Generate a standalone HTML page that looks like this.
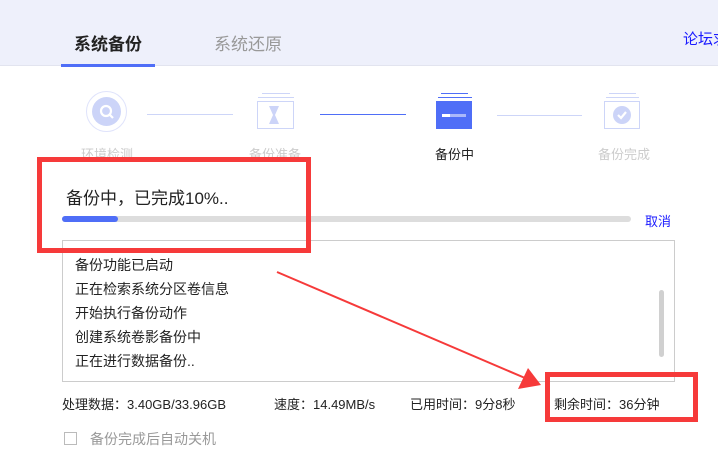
<!DOCTYPE html>
<html><head><meta charset="utf-8"><style>
*{margin:0;padding:0;box-sizing:border-box}
body{width:718px;height:446px;overflow:hidden;background:#fff;position:relative;font-family:"Liberation Sans","Noto Sans CJK SC",sans-serif}
.a{position:absolute;white-space:nowrap}
</style></head><body>
<div class="a" style="left:0;top:0;width:718px;height:66px;background:#eef0fb;border-bottom:1px solid #e2e4ef"></div>
<div class="a" style="left:74px;top:30px;font-size:17px;font-weight:bold;color:#222">系统备份</div>
<div class="a" style="left:214px;top:30px;font-size:17px;color:#999">系统还原</div>
<div class="a" style="left:61px;top:64px;width:94px;height:3px;background:#4f6ef7"></div>
<div class="a" style="left:683px;top:28px;font-size:15px;color:#1a1aff">论坛求</div>

<div class="a" style="left:86px;top:91px;width:41px;height:41px;border-radius:50%;border:1px solid #dfe3fb"></div>
<div class="a" style="left:92px;top:97px;width:29px;height:29px;border-radius:50%;background:#ccd4f8"></div>
<svg class="a" style="left:98px;top:103px" width="18" height="18"><circle cx="8" cy="8" r="5" fill="none" stroke="#fff" stroke-width="2.2"/><line x1="11.5" y1="11.5" x2="15" y2="15" stroke="#fff" stroke-width="2.2"/></svg>
<div class="a" style="left:81px;top:144px;font-size:13px;color:#ccc">环境检测</div>
<div class="a" style="left:147px;top:114px;width:86px;height:1px;background:#cdd5f8"></div>
<div class="a" style="left:262px;top:93px;width:28px;height:1px;background:#cdd5f8"></div>
<div class="a" style="left:258px;top:97px;width:36px;height:1px;background:#cdd5f8"></div>
<div class="a" style="left:257px;top:101px;width:37px;height:28px;border:1px solid #cdd5f8"></div>
<svg class="a" style="left:268px;top:106px" width="14" height="18"><path d="M1 0H11L7 9L11 18H1L5 9Z" fill="#ccd4f8"/></svg>
<div class="a" style="left:249px;top:144px;font-size:13px;color:#ccc">备份准备</div>
<div class="a" style="left:320px;top:114px;width:86px;height:1px;background:#4f6ef7"></div>
<div class="a" style="left:441px;top:93px;width:27px;height:1px;background:#4f6ef7"></div>
<div class="a" style="left:438px;top:97px;width:34px;height:1px;background:#4f6ef7"></div>
<div class="a" style="left:436px;top:101px;width:36px;height:28px;background:#4f6ef7"></div>
<div class="a" style="left:442px;top:114px;width:8px;height:3px;background:#fff"></div>
<div class="a" style="left:450px;top:114px;width:16px;height:3px;background:#aab8fa"></div>
<div class="a" style="left:435px;top:144px;font-size:13px;color:#222">备份中</div>
<div class="a" style="left:497px;top:115px;width:85px;height:1px;background:#cdd5f8"></div>
<div class="a" style="left:609px;top:93px;width:27px;height:1px;background:#cdd5f8"></div>
<div class="a" style="left:606px;top:97px;width:33px;height:1px;background:#cdd5f8"></div>
<div class="a" style="left:604px;top:101px;width:36px;height:28px;border:1px solid #cdd5f8"></div>
<div class="a" style="left:613px;top:106px;width:18px;height:18px;border-radius:50%;background:#ccd4f8"></div>
<svg class="a" style="left:613px;top:106px" width="18" height="18"><path d="M5 9L8 12L13 6" fill="none" stroke="#fff" stroke-width="2.2"/></svg>
<div class="a" style="left:598px;top:144px;font-size:13px;color:#ccc">备份完成</div>

<div class="a" style="left:66px;top:184px;font-size:17px;color:#222">备份中，已完成10%..</div>
<div class="a" style="left:62px;top:216px;width:569px;height:6px;background:#ddd;border-radius:3px"></div>
<div class="a" style="left:62px;top:216px;width:56px;height:6px;background:#4f6ef7;border-radius:3px"></div>
<div class="a" style="left:645px;top:211px;font-size:13px;color:#1a1aff">取消</div>

<div class="a" style="left:62px;top:240px;width:613px;height:142px;border:1px solid #ccc"></div>
<div class="a" style="left:75px;top:253px;font-size:14px;line-height:24px;color:#222">备份功能已启动<br>正在检索系统分区卷信息<br>开始执行备份动作<br>创建系统卷影备份中<br>正在进行数据备份..</div>
<div class="a" style="left:659px;top:290px;width:5px;height:67px;background:#d0d0d0;border-radius:3px"></div>

<div class="a" style="left:62px;top:394px;font-size:13px;color:#222">处理数据：3.40GB/33.96GB</div>
<div class="a" style="left:274px;top:394px;font-size:13px;color:#222">速度：14.49MB/s</div>
<div class="a" style="left:410px;top:394px;font-size:13px;color:#222">已用时间：9分8秒</div>
<div class="a" style="left:554px;top:394px;font-size:13px;color:#222">剩余时间：36分钟</div>

<div class="a" style="left:64px;top:432px;width:13px;height:13px;border:1px solid #bbb"></div>
<div class="a" style="left:90px;top:429px;font-size:14px;color:#999">备份完成后自动关机</div>

<div class="a" style="left:37px;top:157px;width:274px;height:96px;border:5px solid #f63a3a"></div>
<div class="a" style="left:545px;top:372px;width:153px;height:50px;border:5px solid #f63a3a"></div>
<svg class="a" style="left:0;top:0" width="718" height="446"><line x1="277" y1="272" x2="525" y2="378" stroke="#f63a3a" stroke-width="2"/><path d="M541 385L518 389L528 368Z" fill="#f63a3a"/></svg>
</body></html>
